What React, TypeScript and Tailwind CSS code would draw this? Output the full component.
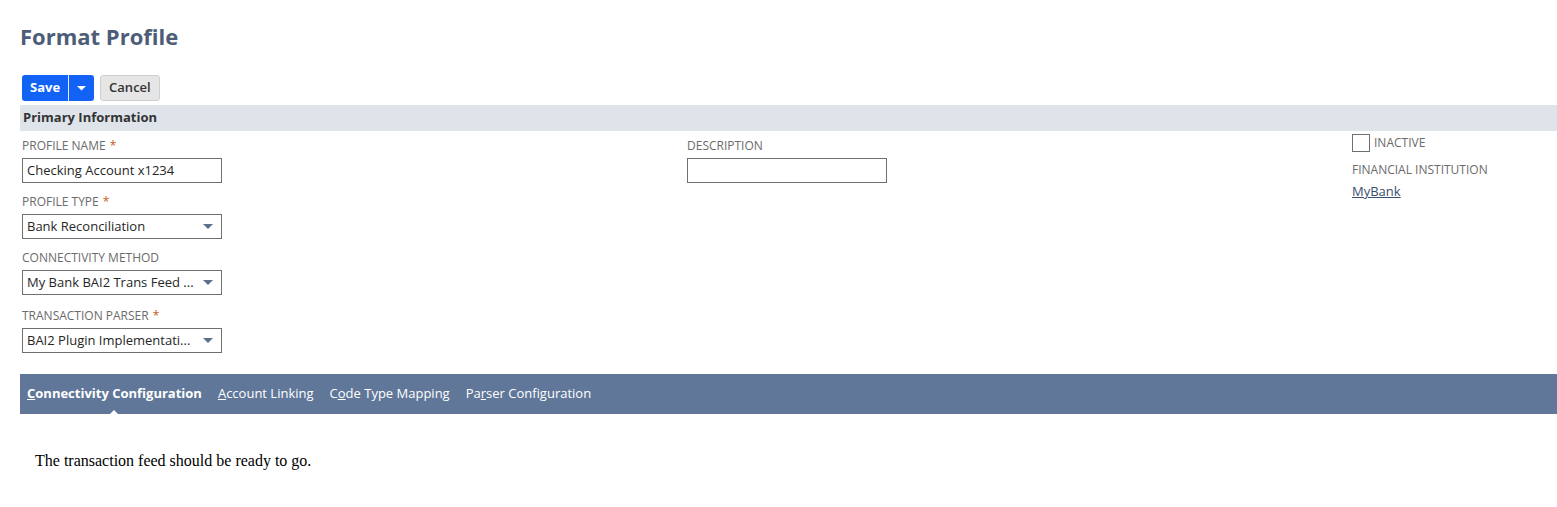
import React from "react";

const sans = "font-['Open_Sans','Noto_Sans',sans-serif]";

function Label({ text, required }: { text: string; required?: boolean }) {
  return (
    <div className="h-[17px] text-[12px] leading-[17px] uppercase text-[#6b6b6b]">
      {text}
      {required && <span className="ml-1 text-[#c65c16]">*</span>}
    </div>
  );
}

function TextBox({ value }: { value: string }) {
  return (
    <div className="mt-[4px] flex h-[25px] w-[200px] items-center border border-[#6f6f6f] bg-white px-[4px] text-[13px] text-[#262626]">
      {value}
    </div>
  );
}

function Select({ value }: { value: string }) {
  return (
    <div className="mt-[4px] flex h-[25px] w-[200px] items-center justify-between border border-[#6f6f6f] bg-white pl-[4px] pr-[8px] text-[13px] text-[#262626]">
      <span className="truncate">{value}</span>
      <svg width="10" height="6" viewBox="0 0 10 6" className="shrink-0">
        <path d="M0 0h10L5 5z" fill="#5d6f8c" />
      </svg>
    </div>
  );
}

export default function App() {
  const tabs = [
    { first: "C", rest: "onnectivity Configuration", active: true },
    { first: "A", rest: "ccount Linking" },
    { pre: "C", first: "o", rest: "de Type Mapping" },
    { pre: "Pa", first: "r", rest: "ser Configuration" },
  ];

  return (
    <div className={`min-h-[507px] w-full bg-white pl-[20px] ${sans}`}>
      <h1 className="pt-[22px] text-[22px] font-bold leading-[28px] text-[#4d5d78]">Format Profile</h1>

      <div className="mt-[25px] flex items-center gap-[6px] pl-[2px]">
        <div className="flex h-[26px] overflow-hidden rounded-[3px] bg-[#1262f5]">
          <button className="px-[8px] text-[13px] font-bold text-white">Save</button>
          <div className="w-px bg-white/90" />
          <button className="flex w-[25px] items-center justify-center">
            <svg width="9" height="5" viewBox="0 0 9 5">
              <path d="M0 0h9L4.5 4.5z" fill="#fff" />
            </svg>
          </button>
        </div>
        <button className="h-[26px] rounded-[3px] border border-[#cfcfcf] bg-[#e6e6e6] px-[8px] text-[13px] font-semibold text-[#333]">
          Cancel
        </button>
      </div>

      <div className="mt-[4px] flex h-[26px] items-center bg-[#dfe4eb] pl-[3px] text-[13px] font-bold text-[#333]">
        Primary Information
      </div>

      <div className="grid grid-cols-[665px_665px_1fr] pl-[2px]">
        <div className="pt-[6px]">
          <Label text="Profile Name" required />
          <TextBox value="Checking Account x1234" />
          <div className="mt-[10px]">
            <Label text="Profile Type" required />
            <Select value="Bank Reconciliation" />
          </div>
          <div className="mt-[10px]">
            <Label text="Connectivity Method" />
            <Select value="My Bank BAI2 Trans Feed ..." />
          </div>
          <div className="mt-[12px]">
            <Label text="Transaction Parser" required />
            <Select value="BAI2 Plugin Implementati..." />
          </div>
        </div>

        <div className="pt-[6px]">
          <Label text="Description" />
          <TextBox value="" />
        </div>

        <div className="pt-[3px]">
          <div className="flex items-center gap-[4px]">
            <div className="h-[18px] w-[18px] border border-[#6f6f6f] bg-white" />
            <span className="text-[12px] uppercase text-[#6b6b6b]">Inactive</span>
          </div>
          <div className="mt-[9px]">
            <Label text="Financial Institution" />
          </div>
          <a className="mt-[4px] block text-[13px] text-[#3a4e6e] underline">MyBank</a>
        </div>
      </div>

      <div className="relative mt-[21px] flex h-[40px] items-center gap-[16px] bg-[#607799] pl-[7px] text-[13px] text-white">
        {tabs.map((t, i) => (
          <div key={i} className={`relative ${t.active ? "font-bold" : ""}`}>
            {t.pre}
            <span className="underline">{t.first}</span>
            {t.rest}
            {t.active && (
              <span className="absolute bottom-[-13px] left-1/2 h-0 w-0 -translate-x-1/2 border-x-[7px] border-b-[7px] border-x-transparent border-b-white" />
            )}
          </div>
        ))}
      </div>

      <p className="mt-[35px] pl-[15px] font-['Liberation_Serif','Times_New_Roman',serif] text-[16px] text-black">
        The transaction feed should be ready to go.
      </p>
    </div>
  );
}
